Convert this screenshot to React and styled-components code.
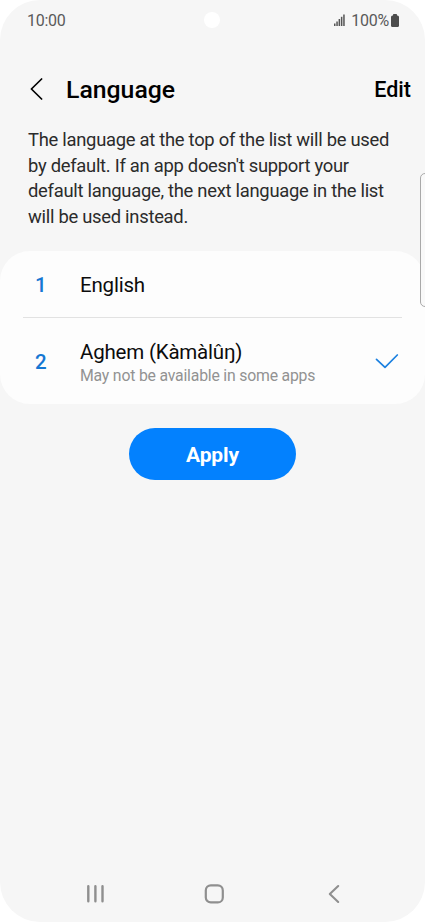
import React, { useState } from 'react';
import styled, { createGlobalStyle } from 'styled-components';

const GlobalStyle = createGlobalStyle`
  * {
    box-sizing: border-box;
  }

  body {
    margin: 0;
    background: #ffffff;
    font-family: Roboto, 'Liberation Sans', sans-serif;
  }
`;

const Screen = styled.div`
  position: relative;
  display: flex;
  flex-direction: column;
  width: 425px;
  height: 922px;
  overflow: hidden;
  background: #f6f6f6;
  border-radius: 40px;
`;

const StatusBar = styled.div`
  display: flex;
  justify-content: space-between;
  align-items: center;
  height: 40px;
  padding: 0 26px 0 27px;
  font-size: 16px;
  letter-spacing: -0.25px;
  color: #5a5a5a;
`;

const StatusIcons = styled.div`
  display: flex;
  align-items: center;
`;

const BatteryLevel = styled.span`
  margin: 0 2px 0 6px;
`;

const Camera = styled.div`
  position: absolute;
  top: 12px;
  left: 204px;
  width: 16px;
  height: 16px;
  border-radius: 50%;
  background: #ffffff;
`;

const Header = styled.header`
  display: flex;
  align-items: center;
  height: 66px;
  margin-top: 16px;
  padding: 0 14px 0 30px;
`;

const IconButton = styled.button`
  display: flex;
  padding: 0;
  border: none;
  background: none;
  cursor: pointer;
`;

const Title = styled.h1`
  flex: 1;
  margin: 0 0 0 22px;
  font-size: 24.8px;
  font-weight: 500;
  color: #000000;
`;

const EditButton = styled.button`
  padding: 0;
  border: none;
  background: none;
  font-family: inherit;
  font-size: 21.5px;
  font-weight: 500;
  color: #000000;
  cursor: pointer;
`;

const Description = styled.p`
  margin: 5px 28px 0;
  font-size: 18.4px;
  letter-spacing: -0.28px;
  line-height: 25.5px;
  color: #2b2b2b;
`;

const LanguageList = styled.ul`
  margin: 22px 0 0;
  padding: 0 23px;
  list-style: none;
  background: #fdfdfd;
  border-radius: 30px;
`;

const LanguageRow = styled.li`
  display: flex;
  align-items: center;
  height: ${(props) => (props.$tall ? '86.5px' : '66px')};
  padding: 2px 3px 0 12px;
  cursor: pointer;

  & + & {
    border-top: 1px solid #e2e2e2;
  }
`;

const Position = styled.span`
  width: 45px;
  font-size: 20.5px;
  font-weight: 500;
  color: #1577d3;
`;

const LanguageText = styled.div`
  flex: 1;
  padding-top: ${(props) => (props.$withNote ? '3px' : '0')};
`;

const LanguageName = styled.div`
  font-size: 20.5px;
  letter-spacing: -0.2px;
  line-height: 26px;
  color: #0c0c0c;
`;

const LanguageNote = styled.div`
  font-size: 15.8px;
  letter-spacing: -0.2px;
  line-height: 22px;
  color: #929292;
`;

const ApplyButton = styled.button`
  align-self: center;
  width: 167px;
  height: 52px;
  margin-top: 24px;
  padding: 3px 0 0;
  border: none;
  border-radius: 26px;
  background: #0381fe;
  font-family: inherit;
  font-size: 21px;
  font-weight: 700;
  letter-spacing: -0.1px;
  color: #ffffff;
  cursor: pointer;
`;

const EdgeHandle = styled.div`
  position: absolute;
  top: 173px;
  right: -6px;
  width: 11px;
  height: 134px;
  border: 1px solid #a9a9a9;
  border-radius: 5px;
  background: #f9f9f9;
`;

const NavBar = styled.nav`
  display: flex;
  justify-content: space-between;
  align-items: center;
  height: 56px;
  margin-top: auto;
  padding: 0 83px 0 85px;
`;

const languages = [
  { id: 'en', name: 'English' },
  { id: 'agq', name: 'Aghem (Kàmàlûŋ)', note: 'May not be available in some apps' },
];

function SignalIcon() {
  return (
    <svg width="11" height="12" viewBox="0 0 11 12" fill="#555555">
      <rect x="0" y="9.5" width="1.5" height="2.5" />
      <rect x="2.3" y="7.5" width="1.5" height="4.5" />
      <rect x="4.6" y="5" width="1.5" height="7" />
      <rect x="6.9" y="2.8" width="1.5" height="9.2" />
      <rect x="9.2" y="0.5" width="1.5" height="11.5" />
    </svg>
  );
}

function BatteryIcon() {
  return (
    <svg width="8" height="13" viewBox="0 0 8 13" fill="#4c4c4c">
      <rect x="2" y="0" width="4" height="3" rx="0.8" />
      <rect x="0" y="1.5" width="8" height="11.5" rx="1.5" />
    </svg>
  );
}

function BackIcon() {
  return (
    <svg width="14" height="22" viewBox="0 0 14 22" fill="none" stroke="#000000" strokeWidth="1.7" strokeLinecap="round" strokeLinejoin="round">
      <path d="M11.6 1L1.4 11L11.6 21" />
    </svg>
  );
}

function CheckIcon() {
  return (
    <svg width="24" height="16" viewBox="0 0 24 16" fill="none" stroke="#1b80e0" strokeWidth="1.7" strokeLinecap="round" strokeLinejoin="round">
      <path d="M1.5 5.3L10 13.3L22.3 1" />
    </svg>
  );
}

function RecentsIcon() {
  return (
    <svg width="20" height="20" viewBox="0 0 20 20" stroke="#8f8f8f" strokeWidth="2.4" strokeLinecap="round">
      <path d="M3.3 2.2V17.2M10.4 2.2V17.2M17.5 2.2V17.2" />
    </svg>
  );
}

function HomeIcon() {
  return (
    <svg width="25" height="20" viewBox="0 0 25 20" fill="none" stroke="#8f8f8f" strokeWidth="2.2">
      <rect x="1.8" y="1.4" width="17" height="17" rx="5" />
    </svg>
  );
}

function NavBackIcon() {
  return (
    <svg width="14" height="20" viewBox="0 0 14 20" fill="none" stroke="#8f8f8f" strokeWidth="2.1" strokeLinecap="round" strokeLinejoin="round">
      <path d="M10.2 2L1.8 10L10.2 18" />
    </svg>
  );
}

function App() {
  const [selected, setSelected] = useState('agq');

  return (
    <>
      <GlobalStyle />
      <Screen>
        <StatusBar>
          <span>10:00</span>
          <StatusIcons>
            <SignalIcon />
            <BatteryLevel>100%</BatteryLevel>
            <BatteryIcon />
          </StatusIcons>
        </StatusBar>
        <Camera />

        <Header>
          <IconButton aria-label="Back">
            <BackIcon />
          </IconButton>
          <Title>Language</Title>
          <EditButton>Edit</EditButton>
        </Header>

        <Description>
          The language at the top of the list will be used by default. If an app doesn't support your
          default language, the next language in the list will be used instead.
        </Description>

        <LanguageList>
          {languages.map((language, index) => (
            <LanguageRow key={language.id} $tall={Boolean(language.note)} onClick={() => setSelected(language.id)}>
              <Position>{index + 1}</Position>
              <LanguageText $withNote={Boolean(language.note)}>
                <LanguageName>{language.name}</LanguageName>
                {language.note && <LanguageNote>{language.note}</LanguageNote>}
              </LanguageText>
              {selected === language.id && <CheckIcon />}
            </LanguageRow>
          ))}
        </LanguageList>

        <ApplyButton>Apply</ApplyButton>
        <EdgeHandle />

        <NavBar>
          <IconButton aria-label="Recents">
            <RecentsIcon />
          </IconButton>
          <IconButton aria-label="Home">
            <HomeIcon />
          </IconButton>
          <IconButton aria-label="Back">
            <NavBackIcon />
          </IconButton>
        </NavBar>
      </Screen>
    </>
  );
}

export default App;
